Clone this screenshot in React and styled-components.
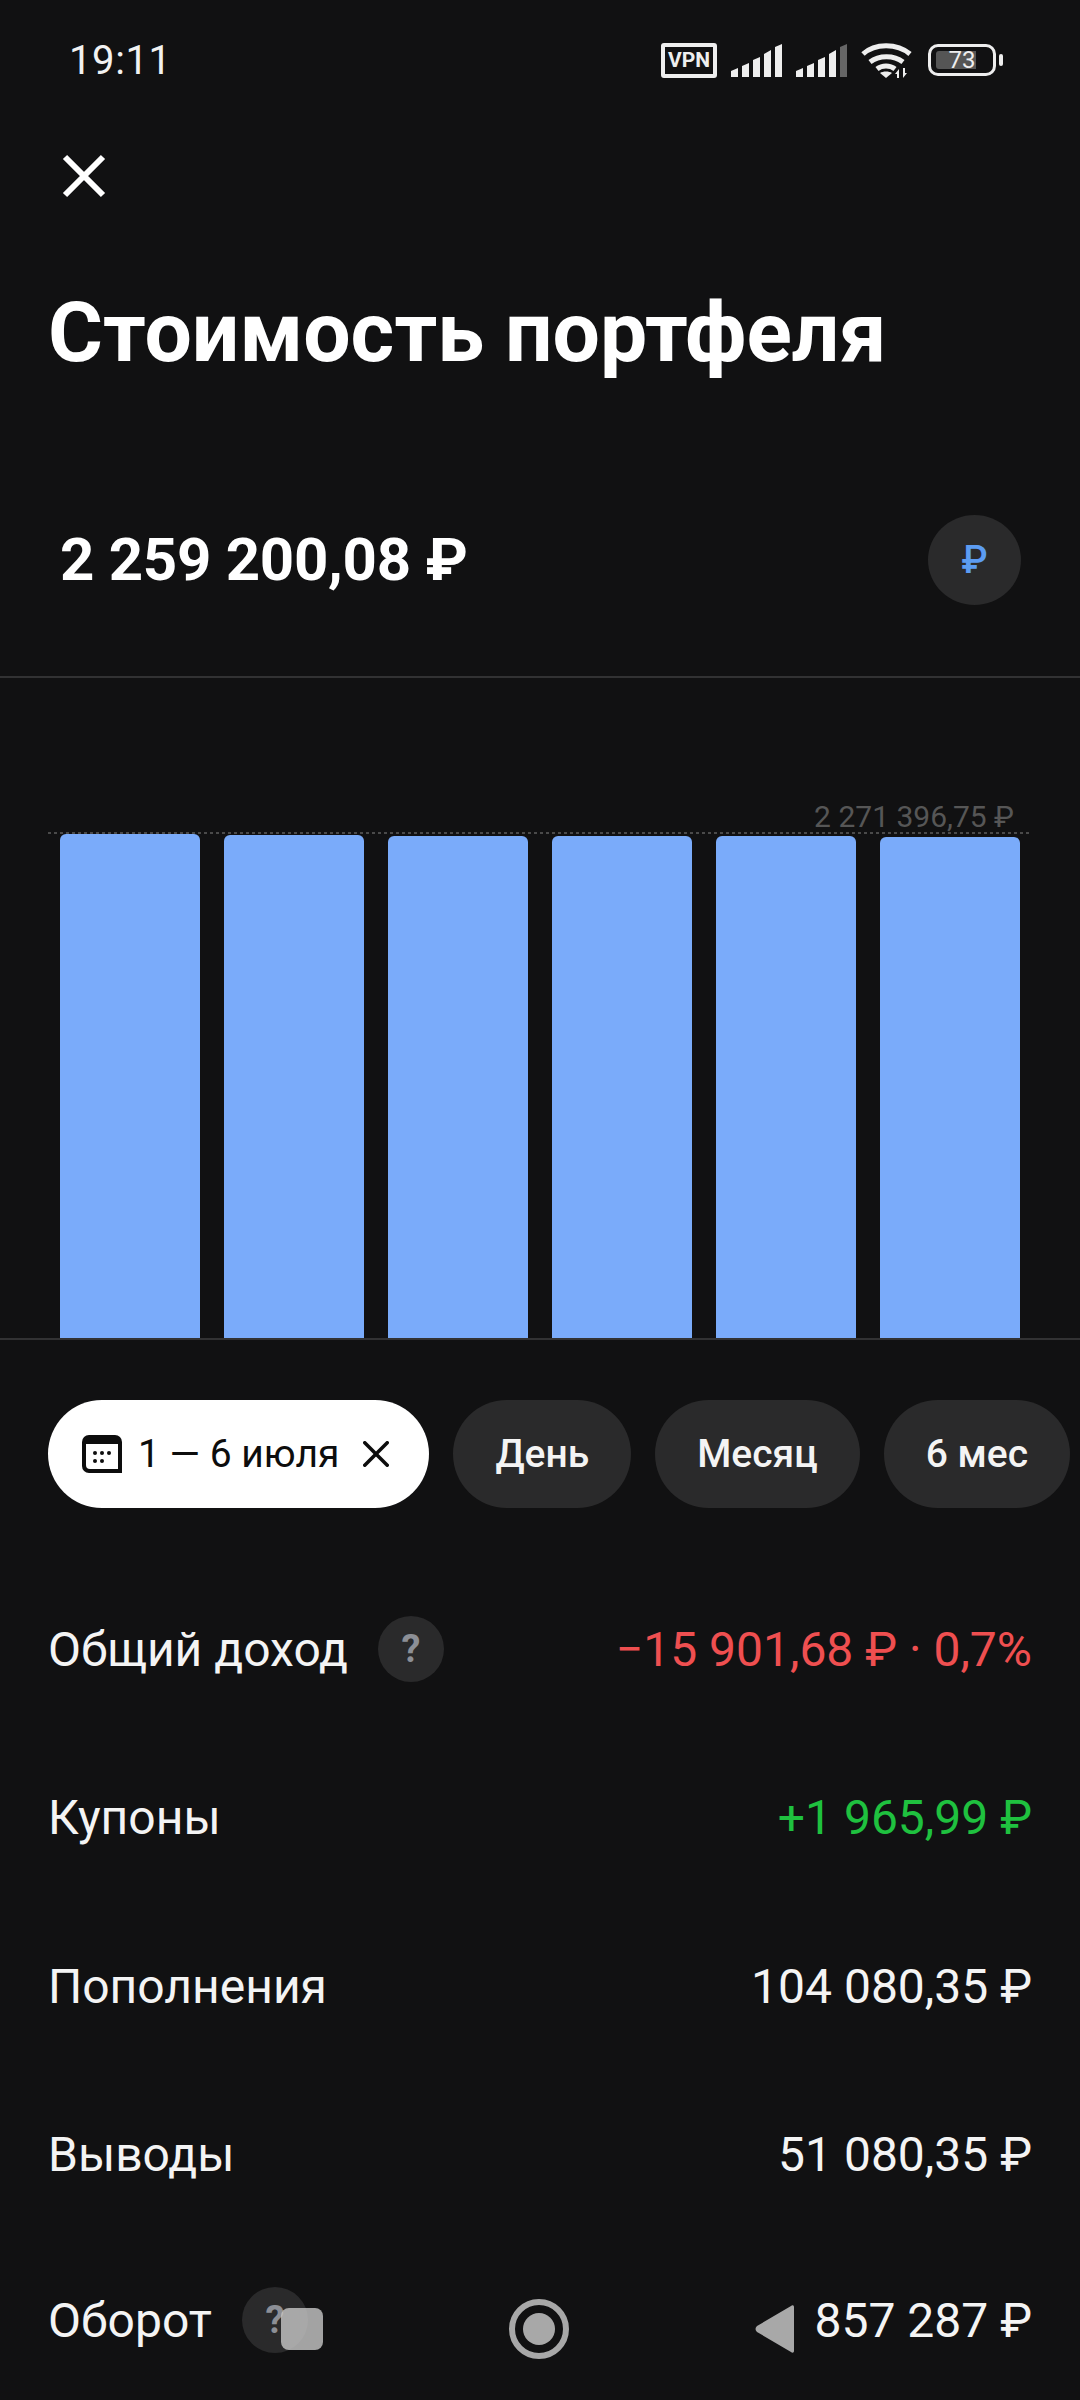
import React from 'react';
import styled, { createGlobalStyle } from 'styled-components';

const GlobalStyle = createGlobalStyle`
  html, body {
    margin: 0;
    padding: 0;
    background: #111112;
  }
  body {
    font-family: Roboto, "Noto Sans", sans-serif;
    color: #fff;
  }
`;

const Page = styled.div`
  position: relative;
  width: 1080px;
  height: 2400px;
  overflow: hidden;
  background: #111112;
`;

const StatusBar = styled.div`
  height: 120px;
  padding: 0 77px 0 69px;
  box-sizing: border-box;
  display: flex;
  align-items: center;
  justify-content: space-between;
`;

const Time = styled.span`
  font-size: 40px;
  letter-spacing: 0.6px;
  color: #f2f2f2;
`;

const StatusIcons = styled.div`
  display: flex;
  align-items: center;
  gap: 14px;
`;

const VpnBox = styled.span`
  width: 56px;
  height: 35px;
  box-sizing: border-box;
  border: 4px solid #eee;
  border-radius: 3px;
  display: flex;
  align-items: center;
  justify-content: center;
  font-size: 21px;
  font-weight: 700;
  color: #eee;
`;

const Battery = styled.span`
  position: relative;
  width: 68px;
  height: 32px;
  box-sizing: border-box;
  border: 3px solid #eee;
  border-radius: 10px;
  margin-left: 2px;
  margin-right: 7px;
  display: flex;
  align-items: center;
  justify-content: center;
  font-size: 24px;
  color: #eee;
  &::before {
    content: '';
    position: absolute;
    left: 5px;
    top: 4px;
    bottom: 4px;
    width: 40px;
    background: #555;
    border-radius: 3px 0 0 3px;
  }
  &::after {
    content: '';
    position: absolute;
    right: -10px;
    top: 7px;
    width: 4px;
    height: 12px;
    border-radius: 2px;
    background: #eee;
  }
`;

const BatteryLevel = styled.span`
  position: relative;
`;

const CloseRow = styled.div`
  height: 76px;
  padding: 34px 0 0 62px;
  display: flex;
  align-items: flex-start;
`;

const Title = styled.h1`
  margin: 0;
  padding: 53px 48px 0;
  font-size: 84px;
  line-height: 100px;
  font-weight: 700;
  color: #fff;
`;

const AmountRow = styled.div`
  margin-top: 132px;
  padding: 0 59px 0 60px;
  height: 90px;
  display: flex;
  align-items: center;
  justify-content: space-between;
`;

const Amount = styled.div`
  font-size: 60px;
  font-weight: 700;
  letter-spacing: -0.3px;
  padding-bottom: 2px;
`;

const CurrencyButton = styled.div`
  width: 93px;
  height: 90px;
  border-radius: 50%;
  background: #2a2a2b;
  color: #5c9cf2;
  font-size: 38px;
  font-weight: 500;
  display: flex;
  align-items: center;
  justify-content: center;
`;

const Divider = styled.div`
  height: 2px;
  background: #323233;
`;

const TopDivider = styled(Divider)`
  margin-top: 71px;
`;

const Chart = styled.div`
  padding: 0 48px;
  height: 660px;
  display: flex;
  flex-direction: column;
  justify-content: flex-end;
`;

const MaxLabel = styled.div`
  text-align: right;
  padding-right: 18px;
  font-size: 30px;
  line-height: 30px;
  color: #565656;
`;

const MaxLine = styled.div`
  height: 2px;
  background: repeating-linear-gradient(90deg, #4a4a4a 0 3px, transparent 3px 6px);
`;

const Bars = styled.div`
  height: 504px;
  padding: 0 12px;
  display: flex;
  align-items: flex-end;
  justify-content: space-between;
`;

const Bar = styled.div`
  width: 140px;
  height: ${({ $h }) => $h}px;
  background: #7aabfa;
  border-radius: 6px 6px 0 0;
`;

const Chips = styled.div`
  margin-top: 60px;
  padding-left: 48px;
  display: flex;
  gap: 24px;
`;

const Chip = styled.div`
  height: 108px;
  box-sizing: border-box;
  padding: 0 ${({ $active }) => ($active ? '40px 0 34px' : '42px')};
  border-radius: 54px;
  background: ${({ $active }) => ($active ? '#fff' : '#2a2a2b')};
  color: ${({ $active }) => ($active ? '#0d0d0d' : '#f4f4f4')};
  font-size: 39px;
  font-weight: ${({ $active }) => ($active ? 400 : 500)};
  display: flex;
  align-items: center;
  white-space: nowrap;
`;

const ChipText = styled.span`
  margin: 0 24px 0 16px;
`;

const Stats = styled.div`
  margin-top: 57px;
  padding: 0 48px;
`;

const Row = styled.div`
  height: 168.5px;
  margin-top: ${({ $tight }) => ($tight ? -3 : 0)}px;
  display: flex;
  align-items: center;
  justify-content: space-between;
  font-size: 48px;
`;

const RowLabel = styled.div`
  display: flex;
  align-items: center;
  gap: 30px;
  color: #f4f4f4;
`;

const RowValue = styled.div`
  color: ${({ $tone }) =>
    $tone === 'loss' ? '#ef4f50' : $tone === 'gain' ? '#1fc13f' : '#f4f4f4'};
`;

const HelpBadge = styled.span`
  width: 66px;
  height: 66px;
  border-radius: 50%;
  background: #2a2a2b;
  color: #8c8f96;
  font-size: 38px;
  font-weight: 700;
  display: flex;
  align-items: center;
  justify-content: center;
`;

const NavBar = styled.div`
  position: absolute;
  left: 281px;
  right: 285px;
  top: 2299px;
  height: 60px;
  display: flex;
  align-items: center;
  justify-content: space-between;
`;

const NavSquare = styled.span`
  width: 42px;
  height: 42px;
  border-radius: 8px;
  background: rgba(200, 200, 200, 0.8);
`;

const NavHome = styled.span`
  width: 60px;
  height: 60px;
  box-sizing: border-box;
  border: 6px solid #a8a8a8;
  border-radius: 50%;
  display: flex;
  align-items: center;
  justify-content: center;
  &::before {
    content: '';
    width: 32px;
    height: 32px;
    border-radius: 50%;
    background: #a8a8a8;
  }
`;

const SignalIcon = ({ dim }) => (
  <svg width="51" height="34" viewBox="0 0 51 34">
    <path d="M0 28l7-3v9H0z" fill="#eee" />
    <path d="M11 23l7-3v14h-7z" fill="#eee" />
    <path d="M22 17l7-3v20h-7z" fill="#eee" />
    <path d="M33 11l7-4v27h-7z" fill="#eee" />
    <path d="M44 4l7-3v33h-7z" fill={dim ? '#666' : '#eee'} />
  </svg>
);

const WifiIcon = () => (
  <svg width="51" height="36" viewBox="0 0 51 36" fill="none" stroke="#eee" strokeWidth="5">
    <path d="M2 12C14 1 36 1 49 12" />
    <path d="M9 20c9-7 24-7 33 0" />
    <path d="M16 27c5-4 13-4 18 0" />
    <path d="M25 36l-6-5c3-2 9-2 12 0z" fill="#eee" stroke="none" />
    <path d="M38 27l-4 5h2v4h2zM42 36l4-5h-2v-5h-2z" fill="#eee" stroke="none" />
  </svg>
);

const CloseIcon = ({ size, width, color, cap }) => (
  <svg width={size} height={size} viewBox="0 0 44 44" fill="none" stroke={color} strokeWidth={width} strokeLinecap={cap}>
    <path d="M3 3l38 38M41 3L3 41" />
  </svg>
);

const CalendarIcon = () => (
  <svg width="40" height="38" viewBox="0 0 40 38">
    <path d="M7 0h26a7 7 0 0 1 7 7v31H7a7 7 0 0 1-7-7V7a7 7 0 0 1 7-7z" fill="#0d0d0d" />
    <path d="M4 9h32v25H8a4 4 0 0 1-4-4z" fill="#fff" />
    <g fill="#0d0d0d">
      <circle cx="13" cy="18" r="2" />
      <circle cx="20" cy="18" r="2" />
      <circle cx="27" cy="18" r="2" />
      <circle cx="13" cy="26" r="2" />
      <circle cx="20" cy="26" r="2" />
    </g>
  </svg>
);

const BackIcon = () => (
  <svg width="40" height="48" viewBox="0 0 40 48">
    <path d="M39 2v44c0 2-2 2-3 1L2 27c-2-2-2-4 0-6L36 1c1-1 3-1 3 1z" fill="#a8a8a8" />
  </svg>
);

const bars = [504, 503, 502, 502, 502, 501];

export default function App() {
  return (
    <Page>
      <GlobalStyle />
      <StatusBar>
        <Time>19:11</Time>
        <StatusIcons>
          <VpnBox>VPN</VpnBox>
          <SignalIcon />
          <SignalIcon dim />
          <WifiIcon />
          <Battery><BatteryLevel>73</BatteryLevel></Battery>
        </StatusIcons>
      </StatusBar>
      <CloseRow>
        <CloseIcon size={44} width={6} color="#fff" cap="butt" />
      </CloseRow>
      <Title>Стоимость портфеля</Title>
      <AmountRow>
        <Amount>2 259 200,08 ₽</Amount>
        <CurrencyButton>₽</CurrencyButton>
      </AmountRow>
      <TopDivider />
      <Chart>
        <MaxLabel>2 271 396,75 ₽</MaxLabel>
        <MaxLine />
        <Bars>
          {bars.map((h, i) => <Bar key={i} $h={h} />)}
        </Bars>
      </Chart>
      <Divider />
      <Chips>
        <Chip $active>
          <CalendarIcon />
          <ChipText>1 — 6 июля</ChipText>
          <CloseIcon size={26} width={6} color="#0d0d0d" cap="round" />
        </Chip>
        <Chip>День</Chip>
        <Chip>Месяц</Chip>
        <Chip>6 мес</Chip>
      </Chips>
      <Stats>
        <Row>
          <RowLabel>Общий доход <HelpBadge>?</HelpBadge></RowLabel>
          <RowValue $tone="loss">−15 901,68 ₽ · 0,7%</RowValue>
        </Row>
        <Row>
          <RowLabel>Купоны</RowLabel>
          <RowValue $tone="gain">+1 965,99 ₽</RowValue>
        </Row>
        <Row>
          <RowLabel>Пополнения</RowLabel>
          <RowValue>104 080,35 ₽</RowValue>
        </Row>
        <Row>
          <RowLabel>Выводы</RowLabel>
          <RowValue>51 080,35 ₽</RowValue>
        </Row>
        <Row $tight>
          <RowLabel>Оборот <HelpBadge>?</HelpBadge></RowLabel>
          <RowValue>857 287 ₽</RowValue>
        </Row>
      </Stats>
      <NavBar>
        <NavSquare />
        <NavHome />
        <BackIcon />
      </NavBar>
    </Page>
  );
}
